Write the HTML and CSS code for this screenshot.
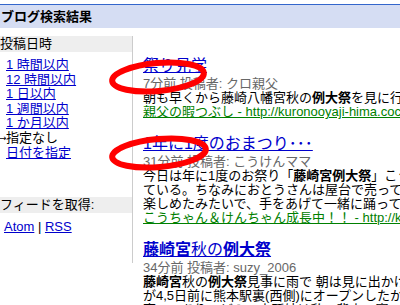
FILE: index.html
```html
<!DOCTYPE html>
<html lang="ja">
<head>
    <meta charset="UTF-8">
    <title>ブログ検索結果</title>
    <link rel="stylesheet" href="styles.css">
</head>
<body>
    <div class="topbar">ブログ検索結果</div>

    <div class="page">
        <aside class="side">
            <div class="side-head">投稿日時</div>
            <ul class="ranges">
                <li><a href="#">1 時間以内</a></li>
                <li><a href="#">12 時間以内</a></li>
                <li><a href="#">1 日以内</a></li>
                <li><a href="#">1 週間以内</a></li>
                <li><a href="#">1 か月以内</a></li>
                <li class="current"><span class="arrow">→</span>指定なし</li>
                <li class="pick"><a href="#">日付を指定</a></li>
            </ul>
            <div class="side-head feed-head">フィードを取得:</div>
            <div class="feeds"><a href="#">Atom</a> | <a href="#">RSS</a></div>
        </aside>

        <main class="results">
            <div class="result">
                <a class="title" href="#">祭り見学</a>
                <div class="meta">7分前 投稿者: クロ親父</div>
                <div class="snippet">朝も早くから藤崎八幡宮秋の<b>例大祭</b>を見に行ってきました。</div>
                <a class="source" href="#">親父の暇つぶし - http://kuronooyaji-hima.cocolog-nifty.com/</a>
            </div>

            <div class="result">
                <a class="title" href="#">1年に1度のおまつり･･･</a>
                <div class="meta">31分前 投稿者: こうけんママ</div>
                <div class="snippet">今日は年に1度のお祭り「<b>藤崎宮例大祭</b>」こうちゃんとけんちゃんも<br>ている。ちなみにおとうさんは屋台で売ってる食べ物に夢中<br>楽しめたみたいで、手をあげて一緒に踊ってました。</div>
                <a class="source" href="#">こうちゃん＆けんちゃん成長中！！ - http://kouken.jugem.jp/</a>
            </div>

            <div class="result">
                <a class="title" href="#"><b>藤崎宮</b>秋の<b>例大祭</b></a>
                <div class="meta">34分前 投稿者: suzy_2006</div>
                <div class="snippet"><b>藤崎宮</b>秋の<b>例大祭</b>見事に雨で 朝は見に出かけられず<br>が4,5日前に熊本駅裏(西側)にオープンしたから行って<br>売ってありょどみの中孫娘は私の背中で寝ってしまい</div>
            </div>
        </main>

        <svg class="marks" width="400" height="305" viewBox="0 0 400 305">
            <ellipse cx="158" cy="77" rx="46" ry="14" transform="rotate(-5 158 77)"/>
            <ellipse cx="159" cy="153" rx="47" ry="14" transform="rotate(-5 159 153)"/>
        </svg>
    </div>
</body>
</html>
```

FILE: styles.css
```css
html, body {
    margin: 0;
    padding: 0;
    font-family: "Liberation Sans", "Noto Sans CJK JP", sans-serif;
    font-size: 13px;
    color: #000;
    overflow: hidden;
}
a {
    color: #00c;
}
.topbar {
    margin-top: 4px;
    height: 23px;
    line-height: 23px;
    border-top: 1px solid #3366cc;
    background: #d5ddf3;
    font-weight: bold;
    padding-left: 1px;
}
.page {
    display: flex;
    margin-top: 8px;
}
.side {
    flex: 0 0 132px;
    height: 227px;
    border-right: 1px solid #ccc;
}
.side-head {
    background: #eee;
    height: 16px;
    line-height: 16px;
}
.ranges {
    list-style: none;
    margin: 0;
    padding: 6px 0 0 6px;
    line-height: 14.5px;
}
.ranges .current {
    margin-left: -7px;
}
.arrow {
    font-family: "DejaVu Sans", sans-serif;
    font-size: 9px;
    display: inline-block;
    width: 7px;
    overflow: hidden;
    vertical-align: top;
}
.ranges .pick {
    margin-top: 1px;
}
.feed-head {
    margin-top: 36px;
}
.feeds {
    padding: 6px 0 0 4px;
}
.results {
    flex: 1;
    min-width: 0;
    padding: 19px 0 0 10px;
    white-space: nowrap;
    overflow: hidden;
}
.result {
    margin-bottom: 14px;
}
.title {
    display: block;
    font-size: 16px;
    line-height: 22px;
}
.meta {
    color: #676767;
    line-height: 14px;
}
.snippet {
    line-height: 14px;
}
.source {
    display: block;
    color: #008000;
    line-height: 14px;
}
.marks {
    position: absolute;
    left: 0;
    top: 0;
    pointer-events: none;
}
.marks ellipse {
    fill: none;
    stroke: #f00;
    stroke-width: 6;
}
```
